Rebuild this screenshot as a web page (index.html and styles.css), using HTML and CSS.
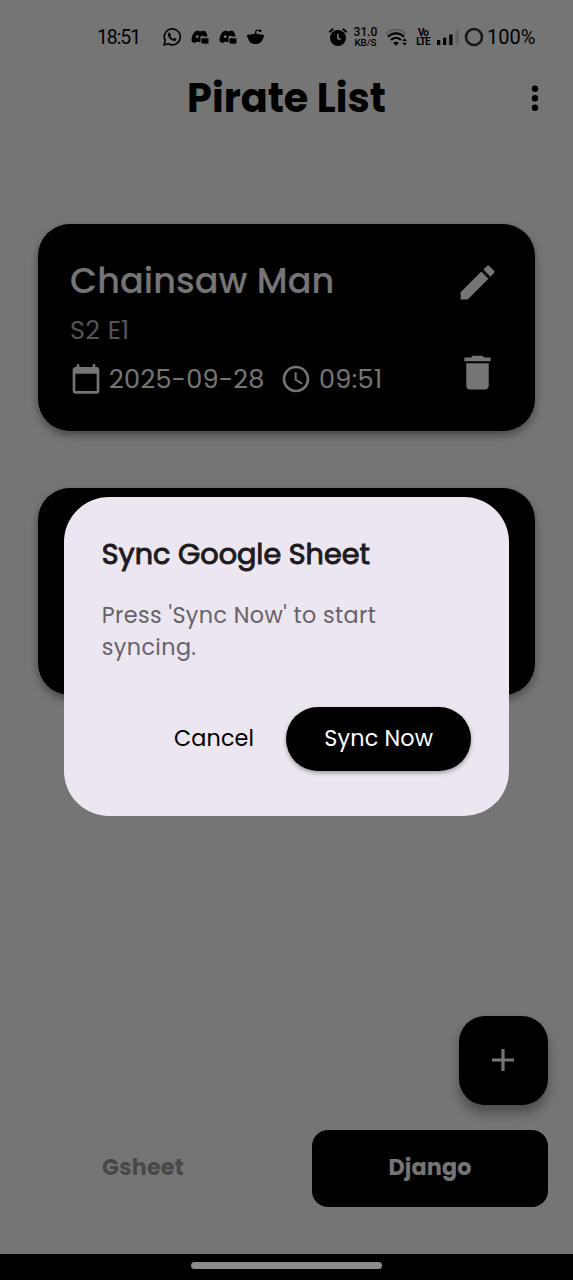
FILE: index.html
```html
<!DOCTYPE html>
<html lang="en">
<head>
<meta charset="utf-8">
<title>Pirate List</title>
<link rel="stylesheet" href="styles.css">
</head>
<body>
<div class="screen">
  <header class="status">
    <span class="clock">18:51</span>
    <div class="notifications">
      <svg width="20" height="20" viewBox="0 0 20 20"><path d="M2 18l1.2-4.4A8 8 0 1 1 6.3 16.8z" fill="none" stroke="#000" stroke-width="1.6" stroke-linejoin="round"/><path d="M7.2 5.4c-.4 0-1.3.7-1.3 2 0 2.6 3.600 6.500 6.500 6.500 1.200 0 2-.8 2-1.700 0-.5-1.900-1.500-2.300-1.300l-.9 1c-1.300-.5-2.300-1.500-2.900-2.700l.7-1c.2-.4-.8-2.800-1.800-2.800z"/></svg>
      <svg class="n2" width="18" height="15" viewBox="0 0 18 15"><path d="M4.500 1.200L7.300.4l.6.9h3l.6-.9 2.800.8c1.300 1.500 2 3.200 2.300 5.300H9.500v5.500H6.500l-.7-.6-1.800 1.600C2.200 12.900.8 12 .4 10.600.6 7 1.600 3.200 4.500 1.200z"/><circle cx="6.200" cy="6.700" r="1.400" fill="#fff"/><path d="M10.500 8.300h7v5.200H15.300l-1.300 1.300v-1.300h-3.500z"/><path d="M9.700 7.700c0-2.400 3.200-2.400 3.200-.2" fill="#fff"/></svg>
      <svg class="n3" width="18" height="15" viewBox="0 0 18 15"><path d="M4.500 1.200L7.300.4l.6.9h3l.6-.9 2.800.8c1.300 1.500 2 3.200 2.300 5.300H9.500v5.500H6.500l-.7-.6-1.800 1.600C2.200 12.900.8 12 .4 10.600.6 7 1.600 3.200 4.500 1.200z"/><circle cx="6.200" cy="6.700" r="1.400" fill="#fff"/><path d="M10.500 8.300h7v5.200H15.300l-1.300 1.300v-1.300h-3.500z"/><path d="M9.700 7.700c0-2.400 3.200-2.400 3.200-.2" fill="#fff"/></svg>
      <svg class="n4" width="19" height="18" viewBox="0 0 19 18"><path d="M1 8.200c0-1.500 1.700-2.200 3-1.300C7 5.500 12 5.500 15 6.900c1.300-.9 3-.2 3 1.300 0 1-.6 1.500-1 1.700C16.500 13.500 13.500 16 9.500 16S2.500 13.500 2 9.900c-.4-.2-1-.7-1-1.700z"/><path d="M9.700 6V3.600c0-1.200 1.500-1.500 3.200-1.300" fill="none" stroke="#000" stroke-width="1.200"/><circle cx="14" cy="2.800" r="1.400"/></svg>
    </div>
    <div class="indicators">
      <svg width="20" height="20" viewBox="0 0 20 20"><circle cx="10" cy="11" r="8"/><path d="M1.300 5.200l3.900-3.500M14.800 1.700l3.900 3.500" stroke="#000" stroke-width="2"/><path d="M9.800 6.800v4.400l2.700 1.600" fill="none" stroke="#fff" stroke-width="1.700"/></svg>
      <div class="speed"><b>31.0</b><span>KB/S</span></div>
      <svg class="wifi" width="23" height="19" viewBox="0 0 23 19"><path d="M1 6.200C6.500.2 15.500.2 21 6.200" fill="none" stroke="#000" stroke-opacity=".2" stroke-width="2.200"/><path d="M3 8.800c4.400-4.700 11.600-4.700 16 0M6 12c2.900-2.900 7-2.900 10 0" fill="none" stroke="#000" stroke-width="2.300"/><path d="M11 17.800l-2.900-3c1.700-1.500 4.100-1.500 5.800 0zM17.300 13l2.300-2.700L22 13zM17.300 14.700H22l-2.400 2.700z"/></svg>
      <div class="volte"><span>Vo</span><span>LTE</span></div>
      <svg class="signal" width="24" height="18" viewBox="0 0 24 18"><path d="M1 12h3.300v5H1zM7 9.800h3.300V17H7zM13.200 6.500h3.300V17h-3.300z"/><path d="M19.600 1.500h3.300V17h-3.300z" opacity=".15"/></svg>
      <svg class="battery" width="20" height="20" viewBox="0 0 20 20"><circle cx="10" cy="10" r="8" fill="none" stroke="#000" stroke-opacity=".8" stroke-width="2.600"/></svg>
      <span class="percent">100%</span>
    </div>
  </header>

  <div class="appbar">
    <h1>Pirate List</h1>
    <svg class="more" width="8" height="28" viewBox="0 0 8 28"><circle cx="4" cy="4.800" r="3.200"/><circle cx="4" cy="14.300" r="3.200"/><circle cx="4" cy="23.800" r="3.200"/></svg>
  </div>

  <main class="list">
    <article class="card">
      <div class="info">
        <h2>Chainsaw Man</h2>
        <p class="episode">S2 E1</p>
        <div class="when">
          <svg width="32" height="32" viewBox="0 0 24 24"><path d="M20 3h-1V1h-2v2H7V1H5v2H4c-1.100 0-2 .9-2 2v16c0 1.100.9 2 2 2h16c1.100 0 2-.9 2-2V5c0-1.100-.9-2-2-2zm0 18H4V8h16v13z"/></svg>
          <span class="date">2025-09-28</span>
          <svg class="time-icon" width="32" height="32" viewBox="0 0 24 24"><path d="M11.990 2C6.470 2 2 6.480 2 12s4.470 10 9.990 10C17.520 22 22 17.520 22 12S17.520 2 11.990 2zM12 20c-4.420 0-8-3.580-8-8s3.580-8 8-8 8 3.580 8 8-3.580 8-8 8z"/><path d="M12.500 7H11v6l5.250 3.150.75-1.230-4.500-2.670z"/></svg>
          <span class="time">09:51</span>
        </div>
      </div>
      <div class="actions">
        <svg width="45" height="45" viewBox="0 0 24 24"><path d="M3 17.250V21h3.750L17.810 9.940l-3.750-3.750L3 17.250zM20.710 7.040c.39-.39.39-1.020 0-1.410l-2.340-2.340c-.39-.39-1.020-.39-1.410 0l-1.830 1.830 3.750 3.750 1.830-1.830z"/></svg>
        <svg width="45" height="45" viewBox="0 0 24 24"><path d="M6 19c0 1.100.9 2 2 2h8c1.100 0 2-.9 2-2V7H6v12zM19 4h-3.500l-1-1h-5l-1 1H5v2h14V4z"/></svg>
      </div>
    </article>
    <article class="card"></article>
  </main>

  <div class="fab-row">
    <button class="fab"><svg width="38" height="38" viewBox="0 0 24 24"><path d="M19 13h-6v6h-2v-6H5v-2h6V5h2v6h6v2z"/></svg></button>
  </div>
  <nav class="tabs">
    <button class="tab">Gsheet</button>
    <button class="tab active">Django</button>
  </nav>
  <div class="system-nav"></div>

  <div class="scrim">
    <section class="dialog">
      <h3>Sync Google Sheet</h3>
      <p>Press 'Sync Now' to start<br>syncing.</p>
      <div class="buttons">
        <button class="cancel">Cancel</button>
        <button class="confirm">Sync Now</button>
      </div>
    </section>
    <div class="handle"></div>
  </div>
</div>
</body>
</html>
```

FILE: styles.css
```css
* { box-sizing: border-box; margin: 0; }
body { font-family: Poppins, Inter, "Open Sans", sans-serif; }
button { font: inherit; border: 0; padding: 0; background: none; }
svg { display: block; flex: none; }
.screen { position: relative; width: 573px; height: 1280px; overflow: hidden; background: #fff; display: flex; flex-direction: column; }

.status { height: 74px; padding: 0 38px 0 97px; display: flex; align-items: center; flex: none; white-space: nowrap; font-family: Roboto, sans-serif; }
.clock { width: 65px; font-size: 19.500px; letter-spacing: -1.100px; }
.notifications { display: flex; align-items: center; }
.n2 { margin-left: 9px; }
.n3 { margin-left: 10px; }
.n4 { margin-left: 9px; }
.indicators { display: flex; align-items: center; margin-left: auto; }
.speed { width: 25px; margin-left: 5px; display: flex; flex-direction: column; align-items: center; }
.speed b { font-size: 12px; font-weight: 500; line-height: 11px; }
.speed span { font-size: 9.800px; font-weight: 500; line-height: 9px; }
.wifi { margin-left: 7px; }
.volte { width: 14px; margin: 0 6px 0 8px; display: flex; flex-direction: column; align-items: center; font: 700 10px/9px Roboto, sans-serif; letter-spacing: -.9px; }
.battery { margin-left: 4px; }
.percent { width: 48px; margin-left: 3px; font-size: 20px; }

.appbar { height: 48px; flex: none; position: relative; display: flex; align-items: center; justify-content: center; }
.appbar h1 { font-size: 39.800px; font-weight: 700; line-height: 48px; white-space: nowrap; }
.more { position: absolute; right: 34px; top: 10px; }

.list { flex: none; margin-top: 102px; padding: 0 38px; display: flex; flex-direction: column; gap: 57px; }
.card { height: 207px; padding: 32px; border-radius: 32px; background: #000; color: #fff; fill: #fff; display: flex; justify-content: space-between; box-shadow: 0 4px 8px rgba(0, 0, 0, .4); white-space: nowrap; }
.card h2 { font-size: 35px; font-weight: 500; letter-spacing: .1px; line-height: 50px; }
.episode { margin-top: 4px; font-size: 25.500px; letter-spacing: .4px; line-height: 40px; color: #b8b8b8; }
.when { margin-top: 12.500px; display: flex; align-items: center; font-size: 25.500px; letter-spacing: .35px; line-height: 32px; }
.when span { padding-bottom: 1px; }
.date { width: 156px; margin-left: 7px; }
.time-icon { margin-left: 15px; }
.time { margin-left: 7px; }
.actions { padding-top: 4px; margin-right: 3px; display: flex; flex-direction: column; gap: 44.500px; }

.fab-row { margin-top: auto; padding-right: 25px; display: flex; justify-content: flex-end; }
.fab { width: 89px; height: 89px; border-radius: 26px; background: #000; fill: #fff; display: flex; align-items: center; justify-content: center; padding: 0 2px 1px 0; box-shadow: 0 8px 12px rgba(0, 0, 0, .35); }
.tabs { margin: 25px 25px 47px; display: grid; grid-template-columns: 236px 236px; justify-content: space-between; }
.tab { height: 77px; padding-bottom: 2px; border-radius: 16px; font-size: 22.300px; font-weight: 700; letter-spacing: .15px; color: #9e9e9e; }
.tab.active { background: #000; color: #fff; }
.system-nav { height: 26px; flex: none; background: #000; }

.scrim { position: absolute; inset: 0; background: rgba(0, 0, 0, .54); display: flex; flex-direction: column; align-items: center; padding-top: 497px; }
.dialog { width: 445.500px; height: 318.500px; padding: 38px; border-radius: 45px; background: #ece6f0; white-space: nowrap; }
.dialog h3 { font-size: 28.650px; font-weight: 400; line-height: 38px; color: #1d1b20; -webkit-text-stroke: .95px #1d1b20; }
.dialog p { margin-top: 27px; font-size: 22.300px; letter-spacing: .4px; line-height: 32px; color: #666269; }
.buttons { margin-top: 43px; display: flex; justify-content: flex-end; gap: 32px; }
.cancel, .confirm { font-size: 22.300px; letter-spacing: .16px; color: #000; height: 63.500px; }
.confirm { width: 185px; border-radius: 32px; background: #000; color: #fff; box-shadow: 0 2px 4px rgba(0, 0, 0, .35); }
.handle { width: 191px; height: 7px; margin-top: auto; margin-bottom: 11px; border-radius: 4px; background: #8c8c8c; }
```
